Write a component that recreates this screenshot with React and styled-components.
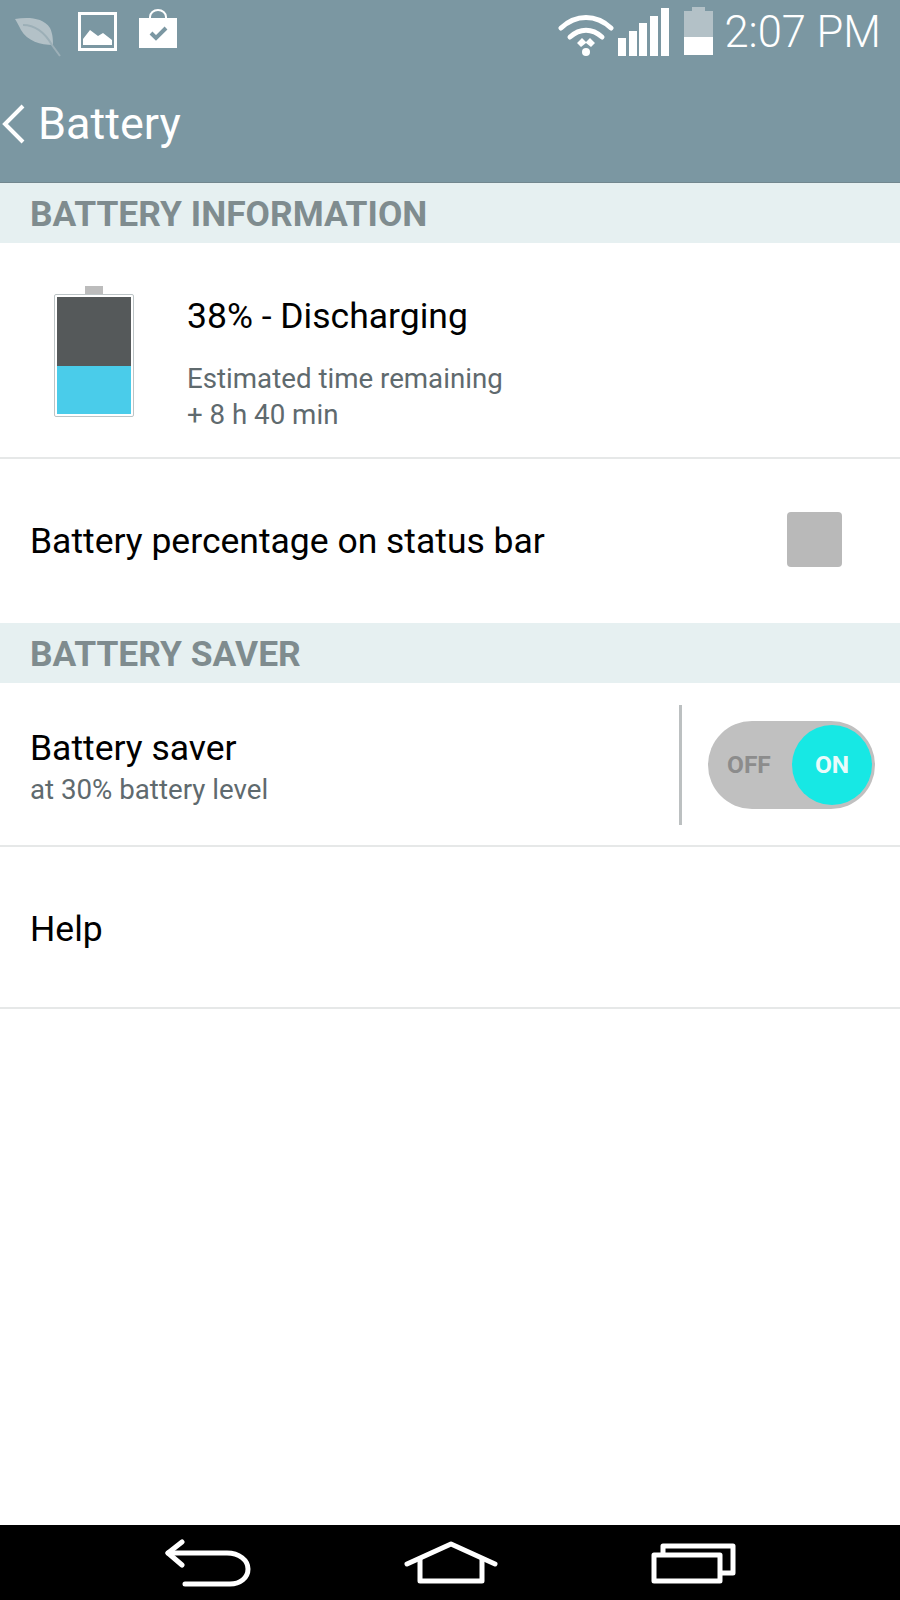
import React from "react";
import styled, { createGlobalStyle } from "styled-components";

const GlobalStyle = createGlobalStyle`
  html, body {
    margin: 0;
    padding: 0;
    background: #fff;
    font-family: Roboto, "Liberation Sans", sans-serif;
  }
  * { box-sizing: border-box; }
`;

const Screen = styled.div`
  width: 900px;
  height: 1600px;
  display: flex;
  flex-direction: column;
  background: #fff;
  overflow: hidden;
`;

const Header = styled.header`
  height: 183px;
  background: #7b97a2;
  color: #fff;
  flex: none;
  border-bottom: 1px solid #72878f;
`;

const StatusBar = styled.div`
  height: 64px;
  display: flex;
  align-items: flex-start;
  justify-content: space-between;
  padding: 7px 19px 0 15px;
`;

const StatusGroup = styled.div`
  display: flex;
  align-items: flex-start;
`;

const Icon = styled.svg`
  flex: none;
  display: block;
  margin-left: ${(p) => p.$left || 0}px;
  margin-top: ${(p) => p.$top || 0}px;
`;

const Clock = styled.span`
  font-size: 43.5px;
  font-weight: 300;
  line-height: 48px;
  margin-left: 11px;
  margin-top: 2px;
  white-space: nowrap;
`;

const TitleRow = styled.div`
  display: flex;
  align-items: center;
  height: 68px;
  padding-left: 2px;
  margin-top: 26px;
`;

const Title = styled.h1`
  margin: 0 0 0 12px;
  font-size: 45px;
  font-weight: 400;
  line-height: 50px;
`;

const Main = styled.main`
  flex: 1;
`;

const SectionHeader = styled.div`
  height: 60px;
  display: flex;
  align-items: center;
  padding: 1px 0 0 30px;
  background: #e6f0f1;
  color: #7f8c8f;
  font-size: 35.4px;
  font-weight: 700;
`;

const Row = styled.div`
  height: ${(p) => p.$height}px;
  display: flex;
  align-items: center;
  padding-left: 30px;
  border-bottom: ${(p) => (p.$divider ? "2px solid #e6e8e8" : "none")};
`;

const BatteryGraphic = styled.div`
  position: relative;
  width: 80px;
  height: 123px;
  margin: 10px 0 0 24px;
  flex: none;
  display: flex;
  flex-direction: column;
  border: 1px solid #bcc4c6;
  padding: 2px;
  border-radius: 2px;
  &::before {
    content: "";
    position: absolute;
    top: -9px;
    left: 30px;
    width: 18px;
    height: 8px;
    background: #bcbcbc;
  }
`;

const BatteryUsed = styled.div`
  flex: 70;
  background: #55595a;
`;

const BatteryLeft = styled.div`
  flex: 48;
  background: #4accea;
`;

const BatteryInfo = styled.div`
  margin-left: 53px;
  margin-top: 28px;
`;

const PrimaryText = styled.div`
  font-size: 35.5px;
  line-height: 40px;
  color: #000;
`;

const HelpText = styled(PrimaryText)`
  margin-top: 4px;
`;

const DetailText = styled.div`
  font-size: 27.7px;
  line-height: 36px;
  color: #5f6a6e;
`;

const SaverDetail = styled(DetailText)`
  margin-top: 4px;
`;

const SaverLabel = styled.div`
  margin-top: 8px;
`;

const DetailBlock = styled.div`
  margin-top: 25px;
`;

const Grow = styled.div`
  flex: 1;
`;

const Checkbox = styled.div`
  width: 55px;
  height: 55px;
  border-radius: 4px;
  background: #b9b9b9;
  margin: 0 58px 4px 0;
`;

const VerticalRule = styled.div`
  width: 3px;
  height: 120px;
  background: #bcc0c1;
  margin: 1px 26px 0 1px;
`;

const Toggle = styled.div`
  width: 167px;
  height: 88px;
  border-radius: 44px;
  background: #c0c0c0;
  margin: 1px 25px 0 0;
  display: flex;
  align-items: center;
  justify-content: space-between;
  padding: 0 3px 0 19px;
  font-size: 24.5px;
  font-weight: 700;
`;

const OffLabel = styled.span`
  color: #8c8c8c;
`;

const Knob = styled.div`
  width: 80px;
  height: 80px;
  border-radius: 50%;
  background: #17e8e4;
  color: #e9fbfb;
  display: flex;
  align-items: center;
  justify-content: center;
`;

const NavBar = styled.nav`
  height: 75px;
  flex: none;
  background: #000;
  display: flex;
  align-items: flex-start;
  justify-content: space-between;
  padding: 0 164px 0 165px;
`;

const LeafIcon = () => (
  <Icon width="46" height="40" viewBox="0 0 46 40" $top={10}>
    <path d="M0 2 C12 0 28 0 35 11 C38 17 38 24 38 28 C26 28 12 24 6 13 C4 9 2 5 0 2Z" fill="#b3c1c7" />
    <path d="M8 8 C20 8 30 16 37 28 L45 39" fill="none" stroke="#9cafb7" strokeWidth="2" />
  </Icon>
);

const PictureIcon = () => (
  <Icon width="40" height="40" viewBox="0 0 40 40" $left={17} $top={5}>
    <rect x="1.5" y="1.5" width="36" height="36" fill="none" stroke="#fff" strokeWidth="3" />
    <path d="M5 33 V27 L12 18 L20 24 L25 21 L34 28 V33Z" fill="#fff" />
  </Icon>
);

const BagIcon = () => (
  <Icon width="40" height="40" viewBox="0 0 40 40" $left={20} $top={2}>
    <path d="M12 10 V8 A8 7 0 0 1 28 8 V10" fill="none" stroke="#fff" strokeWidth="2" />
    <rect x="1" y="9" width="38" height="30" fill="#fff" />
    <path d="M13 24 L18 29 L28 19" fill="none" stroke="#7b97a2" strokeWidth="4" />
  </Icon>
);

const WifiIcon = () => (
  <Icon width="56" height="44" viewBox="0 0 56 44" $top={6}>
    <path d="M3 15 C18 1 38 1 53 15" fill="none" stroke="#fff" strokeWidth="5" strokeLinecap="round" />
    <path d="M12 24 C22 15 34 15 44 24" fill="none" stroke="#fff" strokeWidth="5" strokeLinecap="round" />
    <path d="M19 30 L24 25 L28 29 L32 25 L37 30 L33 34 L28 30 L23 34Z" fill="#fff" />
    <circle cx="28" cy="39" r="4" fill="#fff" />
  </Icon>
);

const SignalIcon = () => (
  <Icon width="52" height="48" viewBox="0 0 52 48" $left={4} $top={1}>
    <rect x="0" y="30" width="8" height="18" fill="#fff" />
    <rect x="11" y="23" width="8" height="25" fill="#fff" />
    <rect x="21" y="15" width="8" height="33" fill="#fff" />
    <rect x="32" y="8" width="8" height="40" fill="#fff" />
    <rect x="43" y="0" width="8" height="48" fill="#fff" />
  </Icon>
);

const StatusBatteryIcon = () => (
  <Icon width="29" height="48" viewBox="0 0 29 48" $left={14}>
    <path d="M8 0 H21 V4 H29 V30 H0 V4 H8Z" fill="#b3c1c7" />
    <rect x="0" y="30" width="29" height="18" fill="#fff" />
  </Icon>
);

const BackChevron = () => (
  <Icon width="24" height="40" viewBox="0 0 24 40">
    <path d="M21 2 L3 20 L21 38" fill="none" stroke="#fff" strokeWidth="4" />
  </Icon>
);

const NavBack = () => (
  <Icon width="86" height="48" viewBox="0 0 86 48" $top={14} fill="none" stroke="#fff" strokeWidth="5" strokeLinecap="round" strokeLinejoin="round">
    <path d="M17 3 L3 14 L17 26" />
    <path d="M3 14 H62 C74 14 83 21 83 30 C83 39 75 45 65 45 H20" />
  </Icon>
);

const NavHome = () => (
  <Icon width="94" height="43" viewBox="0 0 94 43" $top={16} fill="none" stroke="#fff" strokeWidth="5" strokeLinecap="round" strokeLinejoin="round">
    <path d="M3 23 L47 3 L91 23" />
    <path d="M16 18 V40 H78 V18" />
  </Icon>
);

const NavRecent = () => (
  <Icon width="85" height="41" viewBox="0 0 85 41" $top={18} fill="none" stroke="#fff" strokeWidth="5" strokeLinejoin="round">
    <rect x="3" y="12" width="66" height="26" />
    <path d="M12 12 V3 H82 V30 H69" />
  </Icon>
);

export default function App() {
  return (
    <Screen>
      <GlobalStyle />
      <Header>
        <StatusBar>
          <StatusGroup>
            <LeafIcon />
            <PictureIcon />
            <BagIcon />
          </StatusGroup>
          <StatusGroup>
            <WifiIcon />
            <SignalIcon />
            <StatusBatteryIcon />
            <Clock>2:07 PM</Clock>
          </StatusGroup>
        </StatusBar>
        <TitleRow>
          <BackChevron />
          <Title>Battery</Title>
        </TitleRow>
      </Header>
      <Main>
        <SectionHeader>BATTERY INFORMATION</SectionHeader>
        <Row $height={216} $divider>
          <BatteryGraphic>
            <BatteryUsed />
            <BatteryLeft />
          </BatteryGraphic>
          <BatteryInfo>
            <PrimaryText>38% - Discharging</PrimaryText>
            <DetailBlock>
              <DetailText>Estimated time remaining</DetailText>
              <DetailText>+ 8 h 40 min</DetailText>
            </DetailBlock>
          </BatteryInfo>
        </Row>
        <Row $height={164}>
          <PrimaryText>Battery percentage on status bar</PrimaryText>
          <Grow />
          <Checkbox />
        </Row>
        <SectionHeader>BATTERY SAVER</SectionHeader>
        <Row $height={164} $divider>
          <SaverLabel>
            <PrimaryText>Battery saver</PrimaryText>
            <SaverDetail>at 30% battery level</SaverDetail>
          </SaverLabel>
          <Grow />
          <VerticalRule />
          <Toggle>
            <OffLabel>OFF</OffLabel>
            <Knob>ON</Knob>
          </Toggle>
        </Row>
        <Row $height={162} $divider>
          <HelpText>Help</HelpText>
        </Row>
      </Main>
      <NavBar>
        <NavBack />
        <NavHome />
        <NavRecent />
      </NavBar>
    </Screen>
  );
}
